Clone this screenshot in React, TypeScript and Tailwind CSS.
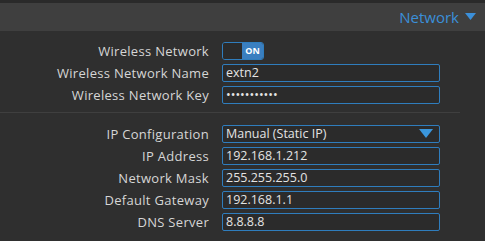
import React from 'react';

const font = { fontFamily: '"Open Sans", "DejaVu Sans", sans-serif' };

const Row = ({ label, children }: { label: string; children: React.ReactNode }) => (
  <div className="flex items-center h-[22px]">
    <div className="w-[222px] pr-[13px] text-right text-[13px] tracking-[0.3px] text-[#d6d6d6] leading-none">{label}</div>
    {children}
  </div>
);

const Field = ({ value }: { value: string }) => (
  <div className="w-[218px] h-[18px] border border-[#2f7dbd] rounded-[2px] bg-[#2b2b2b] px-[3px] flex items-center text-[12.5px] text-[#e4e4e4] leading-none">
    {value}
  </div>
);

export default function App() {
  return (
    <div className="w-[485px] h-[241px] bg-[#2f2f2f] overflow-hidden" style={font}>
      <div className="h-[3px] bg-[#2a2a2a]" />
      <div className="h-[28px] bg-[#3f3f3f] flex items-center justify-end pr-[9px] gap-[6px]">
        <span className="text-[15px] text-[#3b8fd9]">Network</span>
        <svg width="11" height="8" viewBox="0 0 11 8"><path d="M0 0h11L5.5 7z" fill="#3b8fd9" /></svg>
      </div>
      <div className="pt-[9px]">
        <Row label="Wireless Network">
          <div className="w-[42px] h-[18px] border border-[#2f7dbd] rounded-[3px] flex overflow-hidden">
            <div className="flex-1 bg-[#2b2b2b]" />
            <div className="w-[21px] bg-[#3a7fc0] text-white text-[9px] font-bold flex items-center justify-center">ON</div>
          </div>
        </Row>
        <Row label="Wireless Network Name"><Field value="extn2" /></Row>
        <Row label="Wireless Network Key"><Field value="•••••••••••" /></Row>
      </div>
      <div className="mt-[6px] h-px w-[460px] bg-[#3f3f3f]" />
      <div className="pt-[10px]">
        <Row label="IP Configuration">
          <div className="w-[218px] h-[18px] border border-[#2f7dbd] rounded-[2px] bg-[#2b2b2b] pl-[3px] pr-[6px] flex items-center justify-between text-[12.5px] text-[#e4e4e4] leading-none">
            <span>Manual (Static IP)</span>
            <svg width="14" height="10" viewBox="0 0 14 10"><path d="M0 0h14L7 9z" fill="#3a96dc" /></svg>
          </div>
        </Row>
        <Row label="IP Address"><Field value="192.168.1.212" /></Row>
        <Row label="Network Mask"><Field value="255.255.255.0" /></Row>
        <Row label="Default Gateway"><Field value="192.168.1.1" /></Row>
        <Row label="DNS Server"><Field value="8.8.8.8" /></Row>
      </div>
    </div>
  );
}
